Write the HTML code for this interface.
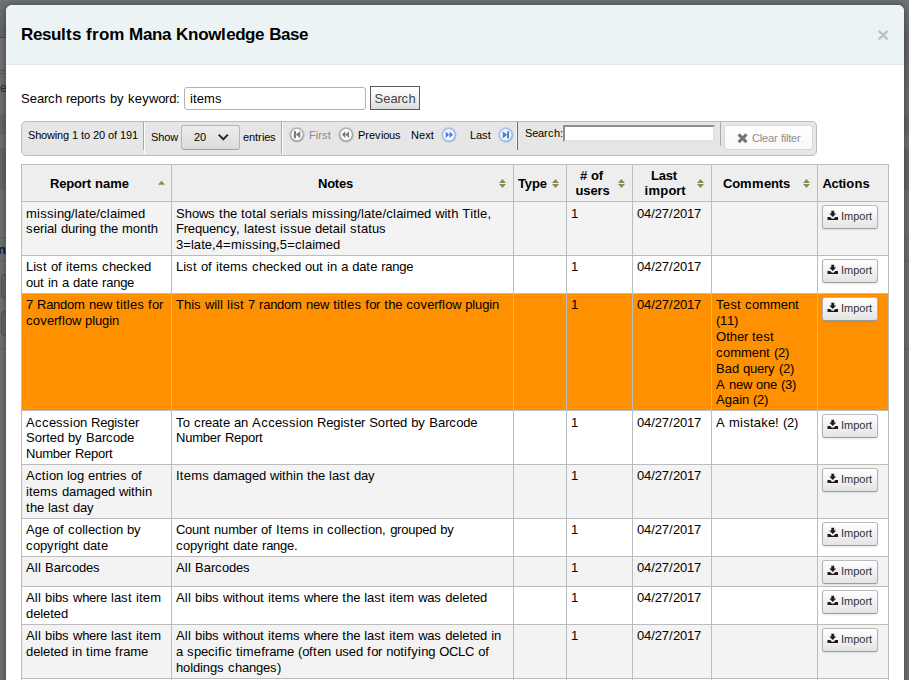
<!DOCTYPE html>
<html lang="en">
<head>
<meta charset="utf-8">
<title>Results from Mana Knowledge Base</title>
<style>
*{box-sizing:border-box;}
html,body{margin:0;padding:0;}
body{width:909px;height:680px;overflow:hidden;position:relative;background:#6b6f6f;
  font-family:"Liberation Sans",Arial,Helvetica,sans-serif;font-size:13px;line-height:16px;color:#000;}
.abs{position:absolute;white-space:nowrap;}
#bd{position:absolute;left:0;top:0;width:909px;height:680px;background:#6f6f6f;}
#bd1{position:absolute;left:0;top:0;width:909px;height:37px;background:linear-gradient(#6e7373,#5f6363);}
#bd2{position:absolute;left:0;top:37px;width:6px;height:1px;background:#4c4c4c;}
#bd3{position:absolute;left:900px;top:0;width:9px;height:114px;background:linear-gradient(#6e7373 0,#616565 38px,#6d6d6b 112px);}
.bl{position:absolute;left:0;width:909px;height:1px;background:#5c6c6d;}
.bb{position:absolute;left:0;width:909px;background:#626767;}
.bk{position:absolute;left:1px;width:40px;height:25px;border:1px solid #505050;border-radius:4px;background:#686868;}
.be{position:absolute;font-size:13px;line-height:16px;color:#0e2f56;}
#modal{position:absolute;left:6px;top:5px;width:898px;height:700px;background:#fff;border-radius:6px 6px 0 0;
  box-shadow:0 0 6px 1px rgba(0,0,0,.32);}
#mhead{position:absolute;left:0;top:0;width:898px;height:60px;background:#ecf3f5;border-bottom:1px solid #e4e6e6;border-radius:6px 6px 0 0;}
#mhead h3{position:absolute;left:15px;top:17px;margin:0;font-size:17px;line-height:26px;font-weight:bold;color:#000;white-space:nowrap;}
#close{position:absolute;left:871px;top:16px;font-size:21px;line-height:28px;font-weight:bold;color:#000;opacity:.2;text-shadow:0 1px 0 #fff;}
#lbl{left:21px;top:91px;font-size:13px;line-height:16px;}
#kw{position:absolute;left:184px;top:87px;width:182px;height:23px;border:1px solid #b4b4ac;border-radius:3px;background:#fff;
  font-size:13px;line-height:21px;padding:0 0 0 5px;color:#000;}
#sbtn{position:absolute;left:370px;top:86px;width:50px;height:24px;border:1px solid #5a5a5a;background:linear-gradient(#fff,#f3f3f3 45%,#dcdcdc);
  font-size:13px;line-height:24px;color:#444;text-align:center;}
#pager{position:absolute;left:21px;top:121px;width:796px;height:35px;border:1px solid #bcbcbc;border-radius:5px;background:#e6e6e6;font-size:11px;line-height:14px;}
#pager .t{position:absolute;white-space:nowrap;color:#000;}
.vl{position:absolute;width:1px;}
table{position:absolute;left:21px;top:164px;width:868px;border-collapse:separate;border-spacing:0;table-layout:fixed;
  border-top:1px solid #bcbcbc;border-right:1px solid #bcbcbc;}
td,th{border-bottom:1px solid #bcbcbc;border-left:1px solid #bcbcbc;padding:0 0 0 4px;vertical-align:top;text-align:left;overflow:hidden;white-space:nowrap;}
th{background:#eeeeee;font-weight:bold;text-align:center;vertical-align:middle;padding:0 18px 0 4px;position:relative;line-height:15px;}
td{background:#fff;}
tr.o td{background:#f3f3f3;}
tr.hl td{background:#ff9000;}
.l{display:block;height:16px;line-height:16px;}
.l.s{height:15px;}
.si{position:absolute;right:6px;top:14px;width:7px;height:9px;}
.si.b{right:7px;}
.hd{display:block;position:relative;}
td.a{padding:3px 0 0 4px;}
.btn{display:block;position:relative;width:56px;height:24px;border:1px solid;border-color:#bababa #b2b2b2 #9d9d9d;border-radius:3px;
  background:linear-gradient(#fff,#e4e4e4);box-shadow:0 1px 2px rgba(0,0,0,.1);font-size:11px;line-height:22px;color:#333;white-space:nowrap;}
.btn svg{position:absolute;left:4px;top:4px;width:12px;height:11px;}
.btn span{position:absolute;left:18px;top:-1px;}
#sel{position:absolute;left:159px;top:3px;width:59px;height:25px;border:1px solid #b6b6b6;border-bottom-color:#a0a0a0;border-radius:3px;background:linear-gradient(#ececec,#dcdcdc);}
#flt{position:absolute;left:541px;top:3px;width:152px;height:17px;background:#fff;border:2px solid;border-color:#8e8e8e #e2e2e2 #e2e2e2 #8e8e8e;}
#clr{position:absolute;left:702px;top:3px;width:89px;height:25px;border:1px solid #d6d6d6;border-radius:3px;background:linear-gradient(#fff,#f8f8f8);}
</style>
</head>
<body>
<svg width="0" height="0" style="position:absolute"><defs><radialGradient id="hg"><stop offset="0.66" stop-color="#6f6f6f" stop-opacity=".8"/><stop offset="0.8" stop-color="#777" stop-opacity=".45"/><stop offset="1" stop-color="#808080" stop-opacity="0"/></radialGradient><radialGradient id="hb"><stop offset="0.66" stop-color="#86abe8" stop-opacity=".95"/><stop offset="0.82" stop-color="#94b6ee" stop-opacity=".6"/><stop offset="1" stop-color="#9fbdf0" stop-opacity="0"/></radialGradient><radialGradient id="hs"><stop offset="0.6" stop-color="#555" stop-opacity=".55"/><stop offset="1" stop-color="#555" stop-opacity="0"/></radialGradient></defs></svg>
<div id="bd"><div id="bd1"></div><div id="bd2"></div><div class="bl" style="top:70px;width:6px;background:#595959"></div><div id="bd3"></div><div class="bl" style="top:73px;width:6px;background:#566a22"></div><div class="bb" style="top:114px;height:21px"></div><div class="bb" style="top:148px;height:42px"></div><div class="bl" style="top:237px;height:2px"></div><div class="bl" style="top:260px;height:2px"></div><div class="bl" style="top:348px;height:2px"></div><div class="bk" style="top:274px"></div><div class="bk" style="top:311px"></div><div class="be" style="left:0;top:80px;font-size:12px">e</div><div class="be" style="left:-2px;top:242px;font-weight:bold;color:#101c3e">n</div></div>
<div id="modal">
  <div id="mhead">
    <h3 style="word-spacing:0.28px"><span style="letter-spacing:-.39px">Resu</span><span style="letter-spacing:.31px">lt</span><span style="letter-spacing:-.45px">s</span> <span style="letter-spacing:.36px">fr</span><span style="letter-spacing:-.25px">om</span> <span style="letter-spacing:-.36px">Mana</span> <span style="letter-spacing:-.32px">Know</span><span style="letter-spacing:.28px">l</span><span style="letter-spacing:-.42px">edge</span> <span style="letter-spacing:-.41px">Base</span></h3>
    <div id="close">×</div>
  </div>
</div>
<div class="abs" id="lbl" style="word-spacing:0.39px"><span style="letter-spacing:.05px">Se</span><span style="letter-spacing:-.28px">ar</span><span style="letter-spacing:.50px">c</span><span style="letter-spacing:-.23px">h</span> <span style="letter-spacing:-.27px">repor</span><span style="letter-spacing:.44px">ts</span> <span style="letter-spacing:-.23px">b</span><span style="letter-spacing:.50px">y</span> <span style="letter-spacing:.26px">key</span><span style="letter-spacing:-.29px">word</span><span style="letter-spacing:.39px">:</span></div>
<div id="kw"><span style="letter-spacing:.11px">item</span><span style="letter-spacing:.50px">s</span></div>
<div id="sbtn"><span style="letter-spacing:.05px">Se</span><span style="letter-spacing:-.28px">ar</span><span style="letter-spacing:.50px">c</span><span style="letter-spacing:-.23px">h</span></div>
<div id="pager">
<div class="t" style="left:6px;top:6px;word-spacing:-0.06px"><span style="letter-spacing:-.17px">Showing</span> <span style="letter-spacing:-.12px">1</span> <span style="letter-spacing:-.09px">to</span> <span style="letter-spacing:-.12px">20</span> <span style="letter-spacing:-.09px">of</span> <span style="letter-spacing:-.12px">191</span></div>
<div class="vl" style="left:121px;top:0;height:28px;background:#a9a9a9"></div>
<div class="vl" style="left:122px;top:0;height:32px;background:#fff"></div>
<div class="t" style="left:129px;top:8px"><span style="letter-spacing:-.13px">Show</span></div>
<div id="sel"><div class="t" style="left:12px;top:4px"><span style="letter-spacing:-.12px">20</span></div><svg style="position:absolute;left:35px;top:7px;" width="12" height="9" viewBox="0 0 12 9"><path d="M1.700 1.600 L6.300 6.300 L10.900 1.600" fill="none" stroke="#2a2a2a" stroke-width="2"/></svg></div>
<div class="t" style="left:221px;top:8px"><span style="letter-spacing:-.10px">ent</span><span style="letter-spacing:.34px">r</span><span style="letter-spacing:-.28px">ie</span><span style="letter-spacing:.50px">s</span></div>
<div class="vl" style="left:259px;top:0;height:32px;background:#a9a9a9"></div>
<div class="vl" style="left:260px;top:0;height:32px;background:#fff"></div>
<svg style="position:absolute;left:264px;top:2px;" width="20" height="20" viewBox="0 0 20 20"><circle cx="10.95" cy="10.90" r="8.400" fill="url(#hg)"/><circle cx="10.95" cy="10.60" r="5.800" fill="#fdfdfd"/><path transform="translate(10.95 10.60)" d="M-3.100 -3.600h2.100v7.200h-2.100z M3.400 -3.700v7.400L-1.200 0z" fill="#7c7c7c"/></svg>
<div class="t" style="left:287px;top:6px;;color:#8a8a8a"><span style="letter-spacing:.06px">Fir</span><span style="letter-spacing:.22px">st</span></div>
<svg style="position:absolute;left:314px;top:2px;" width="20" height="20" viewBox="0 0 20 20"><circle cx="10.10" cy="10.90" r="8.400" fill="url(#hg)"/><circle cx="10.10" cy="10.60" r="5.800" fill="#fdfdfd"/><path transform="translate(10.10 10.60)" d="M-0.700 -3.300v6.600L-4.300 0z M2.900 -3.300v6.600L-0.700 0z" fill="#7c7c7c"/></svg>
<div class="t" style="left:336px;top:6px"><span style="letter-spacing:-.04px">Pre</span><span style="letter-spacing:.50px">v</span><span style="letter-spacing:-.23px">iou</span><span style="letter-spacing:.50px">s</span></div>
<div class="t" style="left:389px;top:6px"><span style="letter-spacing:.10px">Next</span></div>
<svg style="position:absolute;left:416px;top:2px;" width="20" height="20" viewBox="0 0 20 20"><circle cx="11.50" cy="11.70" r="7.300" fill="url(#hs)"/><circle cx="10.90" cy="10.80" r="8.400" fill="url(#hb)"/><circle cx="10.90" cy="10.80" r="5.800" fill="#f4f8fe"/><path transform="translate(10.90 10.80)" d="M-3.200 -3.300v6.600L0.300 0z M0.600 -3.300v6.600L4.200 0z" fill="#4a7fd0"/></svg>
<div class="t" style="left:448px;top:6px"><span style="letter-spacing:-.12px">La</span><span style="letter-spacing:.22px">st</span></div>
<svg style="position:absolute;left:473px;top:2px;" width="20" height="20" viewBox="0 0 20 20"><circle cx="11.40" cy="11.70" r="7.300" fill="url(#hs)"/><circle cx="10.80" cy="10.80" r="8.400" fill="url(#hb)"/><circle cx="10.80" cy="10.80" r="5.800" fill="#f4f8fe"/><path transform="translate(10.80 10.80)" d="M-3.000 -3.600v7.200L1.300 0z M1.300 -3.600h2v7.200h-2z" fill="#4a7fd0"/></svg>
<div class="vl" style="left:494px;top:0;height:28px;background:#f4f4f4"></div>
<div class="vl" style="left:495px;top:0;height:28px;background:#6c6c6c"></div>
<div class="t" style="left:503px;top:4px"><span style="letter-spacing:-.19px">Sea</span><span style="letter-spacing:.42px">rc</span><span style="letter-spacing:-.09px">h:</span></div>
<div id="flt"></div>
<div class="vl" style="left:698px;top:0;height:24px;background:#a9a9a9"></div>
<div id="clr"><svg style="position:absolute;left:12px;top:7px;" width="11" height="11" viewBox="0 0 11 11"><path d="M1.600 1.400 L9.500 9.200 M9.500 1.400 L1.600 9.200" stroke="#757575" stroke-width="3.100" fill="none"/></svg><div class="t" style="left:27px;top:5px;word-spacing:-0.06px;color:#8c8c8c;text-shadow:0 1px 1px rgba(255,255,255,.75)"><span style="letter-spacing:-.16px">Clea</span><span style="letter-spacing:.34px">r</span> <span style="letter-spacing:-.22px">filte</span><span style="letter-spacing:.34px">r</span></div></div>
</div>
<table>
<colgroup><col style="width:150px"><col style="width:342px"><col style="width:53px"><col style="width:66px"><col style="width:79px"><col style="width:106px"><col style="width:71px"></colgroup>
<thead>
<tr style="height:37px">
 <th><span class="hd" style="word-spacing:0.39px"><span style="letter-spacing:-.19px">Rep</span><span style="letter-spacing:-.11px">ort</span> name</span><svg class="si" viewBox="0 0 7 9"><path d="M0 5.700h7L3.500 1.700z" fill="#8a8a55"/></svg></th>
 <th><span class="hd"><span style="letter-spacing:-.22px">Notes</span></span><svg class="si b" viewBox="0 0 7 9"><path d="M0 4h7L3.500 0z M0 5h7L3.500 9z" fill="#8a8a55"/></svg></th>
 <th><span class="hd" style=";left:-0.5px"><span style="letter-spacing:-.09px">Type</span></span><svg class="si b" viewBox="0 0 7 9"><path d="M0 4h7L3.500 0z M0 5h7L3.500 9z" fill="#8a8a55"/></svg></th>
 <th><span class="hd" style="word-spacing:0.39px;left:-1px"><span style="letter-spacing:-.23px">#</span> <span style="letter-spacing:-.14px">of</span></span> <span class="hd"><span style="letter-spacing:-.14px">users</span></span><svg class="si b" viewBox="0 0 7 9"><path d="M0 4h7L3.500 0z M0 5h7L3.500 9z" fill="#8a8a55"/></svg></th>
 <th><span class="hd" style=";left:-1px"><span style="letter-spacing:-.18px">Last</span></span> <span class="hd"><span style="letter-spacing:.30px">imp</span><span style="letter-spacing:-.11px">ort</span></span><svg class="si b" viewBox="0 0 7 9"><path d="M0 4h7L3.500 0z M0 5h7L3.500 9z" fill="#8a8a55"/></svg></th>
 <th><span class="hd" style=";left:-1px"><span style="letter-spacing:-.16px">Co</span><span style="letter-spacing:.44px">mm</span><span style="letter-spacing:-.18px">ents</span></span><svg class="si b" viewBox="0 0 7 9"><path d="M0 4h7L3.500 0z M0 5h7L3.500 9z" fill="#8a8a55"/></svg></th>
 <th><span class="hd"><span style="letter-spacing:-.32px">Act</span><span style="letter-spacing:.17px">ion</span><span style="letter-spacing:-.23px">s</span></span></th>
</tr>
</thead>
<tbody>
<tr class="o" style="height:54px"><td style="padding-top:4px"><span class="l s"><span style="letter-spacing:.28px">missi</span><span style="letter-spacing:-.23px">ng</span><span style="letter-spacing:.14px">/late/</span><span style="letter-spacing:.31px">cl</span><span style="letter-spacing:-.08px">aimed</span></span> <span class="l" style="word-spacing:0.39px"><span style="letter-spacing:.50px">s</span><span style="letter-spacing:-.17px">eria</span><span style="letter-spacing:.11px">l</span> <span style="letter-spacing:-.19px">during</span> <span style="letter-spacing:.39px">t</span><span style="letter-spacing:-.23px">he</span> <span style="letter-spacing:-.03px">month</span></span></td><td style="padding-top:4px"><span class="l s" style="word-spacing:0.39px"><span style="letter-spacing:.05px">Sh</span><span style="letter-spacing:-.31px">ow</span><span style="letter-spacing:.50px">s</span> <span style="letter-spacing:.39px">t</span><span style="letter-spacing:-.23px">he</span> <span style="letter-spacing:.18px">tot</span><span style="letter-spacing:-.06px">al</span> <span style="letter-spacing:.50px">s</span><span style="letter-spacing:-.17px">eria</span><span style="letter-spacing:.31px">ls</span> <span style="letter-spacing:.28px">missi</span><span style="letter-spacing:-.23px">ng</span><span style="letter-spacing:.14px">/late/</span><span style="letter-spacing:.31px">cl</span><span style="letter-spacing:-.08px">aimed</span> <span style="letter-spacing:-.14px">wi</span><span style="letter-spacing:.39px">t</span><span style="letter-spacing:-.23px">h</span> <span style="font-kerning:none"><span style="letter-spacing:.14px">Title,</span></span></span> <span class="l" style="word-spacing:0.39px"><span style="letter-spacing:-.20px">Frequen</span><span style="letter-spacing:.45px">cy,</span> late<span style="letter-spacing:.44px">st</span> <span style="letter-spacing:.37px">iss</span><span style="letter-spacing:-.23px">ue</span> <span style="letter-spacing:-.23px">de</span><span style="letter-spacing:.10px">tail</span> <span style="letter-spacing:.44px">st</span><span style="letter-spacing:-.02px">atu</span><span style="letter-spacing:.50px">s</span></span> <span class="l"><span style="letter-spacing:.05px">3=late,4</span><span style="letter-spacing:.30px">=missi</span><span style="letter-spacing:-.23px">ng</span><span style="letter-spacing:.19px">,5=</span><span style="letter-spacing:.31px">cl</span><span style="letter-spacing:-.08px">aimed</span></span></td><td></td><td style="padding-top:4px"><span class="l s"><span style="letter-spacing:-.23px">1</span></span></td><td style="padding-top:4px"><span class="l s"><span style="letter-spacing:-.11px">04/27</span><span style="letter-spacing:.39px">/</span><span style="letter-spacing:-.23px">2017</span></span></td><td></td><td class="a"><div class="btn"><svg viewBox="-0.5 -0.8 12 11"><path d="M3.800 0h2.900v2.800h2L5.250 6.300 1.800 2.800h2z M0 6.200h2.600l1.800 1.700h1.700l1.800-1.700h2.600v2.900H0z" fill="#1c1c1c"/></svg><span>Import</span></div></td></tr>
<tr style="height:38px"><td style="padding-top:3px"><span class="l" style="word-spacing:0.39px"><span style="letter-spacing:-.06px">Li</span><span style="letter-spacing:.44px">st</span> <span style="letter-spacing:-.23px">o</span><span style="letter-spacing:.39px">f</span> <span style="letter-spacing:.11px">item</span><span style="letter-spacing:.50px">s</span> <span style="letter-spacing:.50px">c</span><span style="letter-spacing:-.23px">he</span><span style="letter-spacing:.50px">ck</span><span style="letter-spacing:-.23px">ed</span></span> <span class="l" style="word-spacing:0.39px"><span style="letter-spacing:-.23px">ou</span><span style="letter-spacing:.39px">t</span> <span style="letter-spacing:-.06px">in</span> <span style="letter-spacing:-.23px">a</span> <span style="letter-spacing:-.23px">da</span><span style="letter-spacing:.39px">t</span><span style="letter-spacing:-.23px">e</span> <span style="letter-spacing:-.25px">range</span></span></td><td style="padding-top:3px"><span class="l" style="word-spacing:0.39px"><span style="letter-spacing:-.06px">Li</span><span style="letter-spacing:.44px">st</span> <span style="letter-spacing:-.23px">o</span><span style="letter-spacing:.39px">f</span> <span style="letter-spacing:.11px">item</span><span style="letter-spacing:.50px">s</span> <span style="letter-spacing:.50px">c</span><span style="letter-spacing:-.23px">he</span><span style="letter-spacing:.50px">ck</span><span style="letter-spacing:-.23px">ed</span> <span style="letter-spacing:-.23px">ou</span><span style="letter-spacing:.39px">t</span> <span style="letter-spacing:-.06px">in</span> <span style="letter-spacing:-.23px">a</span> <span style="letter-spacing:-.23px">da</span><span style="letter-spacing:.39px">t</span><span style="letter-spacing:-.23px">e</span> <span style="letter-spacing:-.25px">range</span></span></td><td></td><td style="padding-top:3px"><span class="l"><span style="letter-spacing:-.23px">1</span></span></td><td style="padding-top:3px"><span class="l"><span style="letter-spacing:-.11px">04/27</span><span style="letter-spacing:.39px">/</span><span style="letter-spacing:-.23px">2017</span></span></td><td></td><td class="a"><div class="btn"><svg viewBox="-0.5 -0.8 12 11"><path d="M3.800 0h2.900v2.800h2L5.250 6.300 1.800 2.800h2z M0 6.200h2.600l1.800 1.700h1.700l1.800-1.700h2.600v2.900H0z" fill="#1c1c1c"/></svg><span>Import</span></div></td></tr>
<tr class="hl" style="height:117px"><td style="padding-top:3px"><span class="l" style="word-spacing:0.39px"><span style="letter-spacing:-.23px">7</span> <span style="letter-spacing:-.26px">Rando</span><span style="letter-spacing:.17px">m</span> <span style="letter-spacing:-.28px">new</span> <span style="letter-spacing:.21px">titles</span> <span style="letter-spacing:.39px">f</span><span style="letter-spacing:-.28px">or</span></span> <span class="l" style="word-spacing:0.39px"><span style="letter-spacing:.26px">cov</span><span style="letter-spacing:-.28px">er</span><span style="letter-spacing:.25px">fl</span><span style="letter-spacing:-.31px">ow</span> <span style="letter-spacing:-.12px">plugin</span></span></td><td style="padding-top:3px"><span class="l" style="word-spacing:0.39px"><span style="letter-spacing:-.02px">Thi</span><span style="letter-spacing:.50px">s</span> <span style="letter-spacing:-.14px">wi</span><span style="letter-spacing:.11px">ll</span> <span style="letter-spacing:.24px">lis</span><span style="letter-spacing:.39px">t</span> <span style="letter-spacing:-.23px">7</span> <span style="letter-spacing:-.25px">rando</span><span style="letter-spacing:.17px">m</span> <span style="letter-spacing:-.28px">new</span> <span style="letter-spacing:.21px">titles</span> <span style="letter-spacing:.39px">f</span><span style="letter-spacing:-.28px">or</span> <span style="letter-spacing:.39px">t</span><span style="letter-spacing:-.23px">he</span> <span style="letter-spacing:.26px">cov</span><span style="letter-spacing:-.28px">er</span><span style="letter-spacing:.25px">fl</span><span style="letter-spacing:-.31px">ow</span> <span style="letter-spacing:-.12px">plugin</span></span></td><td></td><td style="padding-top:3px"><span class="l"><span style="letter-spacing:-.23px">1</span></span></td><td style="padding-top:3px"><span class="l"><span style="letter-spacing:-.11px">04/27</span><span style="letter-spacing:.39px">/</span><span style="letter-spacing:-.23px">2017</span></span></td><td style="padding-top:3px"><span class="l" style="word-spacing:0.39px"><span style="letter-spacing:.26px">Tes</span><span style="letter-spacing:.39px">t</span> <span style="letter-spacing:.50px">c</span><span style="letter-spacing:-.03px">omme</span><span style="letter-spacing:-.23px">n</span><span style="letter-spacing:.39px">t</span></span> <span class="l"><span style="font-kerning:none"><span style="letter-spacing:-.28px">(11)</span></span></span> <span class="l" style="word-spacing:0.39px"><span style="letter-spacing:.02px">Oth</span><span style="letter-spacing:-.28px">er</span> <span style="letter-spacing:.22px">tes</span><span style="letter-spacing:.39px">t</span></span> <span class="l" style="word-spacing:0.39px"><span style="letter-spacing:.50px">c</span><span style="letter-spacing:-.03px">omme</span><span style="letter-spacing:-.23px">n</span><span style="letter-spacing:.39px">t</span> <span style="letter-spacing:-.30px">(2)</span></span> <span class="l" style="word-spacing:0.39px"><span style="letter-spacing:.05px">Ba</span><span style="letter-spacing:-.23px">d</span> <span style="letter-spacing:-.25px">quer</span><span style="letter-spacing:.50px">y</span> <span style="letter-spacing:-.30px">(2)</span></span> <span class="l s" style="word-spacing:0.39px"><span style="letter-spacing:.33px">A</span> <span style="letter-spacing:-.28px">new</span> <span style="letter-spacing:-.23px">one</span> <span style="letter-spacing:-.30px">(3)</span></span> <span class="l" style="word-spacing:0.39px"><span style="letter-spacing:.05px">Ag</span><span style="letter-spacing:-.12px">ain</span> <span style="letter-spacing:-.30px">(2)</span></span></td><td class="a"><div class="btn"><svg viewBox="-0.5 -0.8 12 11"><path d="M3.800 0h2.900v2.800h2L5.250 6.300 1.800 2.800h2z M0 6.200h2.600l1.800 1.700h1.700l1.800-1.700h2.600v2.900H0z" fill="#1c1c1c"/></svg><span>Import</span></div></td></tr>
<tr style="height:54px"><td style="padding-top:4px"><span class="l s" style="word-spacing:0.39px"><span style="letter-spacing:.44px">Acc</span><span style="letter-spacing:-.23px">e</span><span style="letter-spacing:.37px">ssi</span><span style="letter-spacing:-.23px">on</span> <span style="letter-spacing:-.18px">Regi</span><span style="letter-spacing:.44px">st</span><span style="letter-spacing:-.28px">er</span></span> <span class="l" style="word-spacing:0.39px"><span style="letter-spacing:.05px">So</span><span style="letter-spacing:-.10px">rted</span> <span style="letter-spacing:-.23px">b</span><span style="letter-spacing:.50px">y</span> <span style="letter-spacing:.05px">Ba</span><span style="letter-spacing:-.33px">r</span><span style="letter-spacing:.50px">c</span><span style="letter-spacing:-.23px">ode</span></span> <span class="l" style="word-spacing:0.39px"><span style="letter-spacing:-.21px">Number</span> <span style="letter-spacing:-.28px">Repor</span><span style="letter-spacing:.39px">t</span></span></td><td style="padding-top:4px"><span class="l s" style="word-spacing:0.39px"><span style="letter-spacing:.13px">To</span> <span style="letter-spacing:.50px">c</span><span style="letter-spacing:-.26px">rea</span><span style="letter-spacing:.39px">t</span><span style="letter-spacing:-.23px">e</span> <span style="letter-spacing:-.23px">an</span> <span style="letter-spacing:.44px">Acc</span><span style="letter-spacing:-.23px">e</span><span style="letter-spacing:.37px">ssi</span><span style="letter-spacing:-.23px">on</span> <span style="letter-spacing:-.18px">Regi</span><span style="letter-spacing:.44px">st</span><span style="letter-spacing:-.28px">er</span> <span style="letter-spacing:.05px">So</span><span style="letter-spacing:-.10px">rted</span> <span style="letter-spacing:-.23px">b</span><span style="letter-spacing:.50px">y</span> <span style="letter-spacing:.05px">Ba</span><span style="letter-spacing:-.33px">r</span><span style="letter-spacing:.50px">c</span><span style="letter-spacing:-.23px">ode</span></span> <span class="l" style="word-spacing:0.39px"><span style="letter-spacing:-.21px">Number</span> <span style="letter-spacing:-.28px">Repor</span><span style="letter-spacing:.39px">t</span></span></td><td></td><td style="padding-top:4px"><span class="l s"><span style="letter-spacing:-.23px">1</span></span></td><td style="padding-top:4px"><span class="l s"><span style="letter-spacing:-.11px">04/27</span><span style="letter-spacing:.39px">/</span><span style="letter-spacing:-.23px">2017</span></span></td><td style="padding-top:4px"><span class="l s" style="word-spacing:0.39px"><span style="letter-spacing:.33px">A</span> <span style="letter-spacing:.24px">mistak</span><span style="letter-spacing:-.23px">e</span><span style="letter-spacing:.39px">!</span> <span style="letter-spacing:-.30px">(2)</span></span></td><td class="a"><div class="btn"><svg viewBox="-0.5 -0.8 12 11"><path d="M3.800 0h2.900v2.800h2L5.250 6.300 1.800 2.800h2z M0 6.200h2.600l1.800 1.700h1.700l1.800-1.700h2.600v2.900H0z" fill="#1c1c1c"/></svg><span>Import</span></div></td></tr>
<tr class="o" style="height:54px"><td style="padding-top:3px"><span class="l" style="word-spacing:0.39px"><span style="letter-spacing:.33px">Acti</span><span style="letter-spacing:-.23px">on</span> <span style="letter-spacing:-.12px">log</span> <span style="letter-spacing:-.09px">entrie</span><span style="letter-spacing:.50px">s</span> <span style="letter-spacing:-.23px">o</span><span style="letter-spacing:.39px">f</span></span> <span class="l" style="word-spacing:0.39px"><span style="letter-spacing:.11px">item</span><span style="letter-spacing:.50px">s</span> <span style="letter-spacing:-.17px">damaged</span> <span style="letter-spacing:-.14px">wi</span><span style="letter-spacing:.09px">thi</span><span style="letter-spacing:-.23px">n</span></span> <span class="l" style="word-spacing:0.39px"><span style="letter-spacing:.39px">t</span><span style="letter-spacing:-.23px">he</span> <span style="letter-spacing:-.06px">la</span><span style="letter-spacing:.44px">st</span> <span style="letter-spacing:-.23px">da</span><span style="letter-spacing:.50px">y</span></span></td><td style="padding-top:3px"><span class="l" style="word-spacing:0.39px"><span style="letter-spacing:.24px">Items</span> <span style="letter-spacing:-.17px">damaged</span> <span style="letter-spacing:-.14px">wi</span><span style="letter-spacing:.09px">thi</span><span style="letter-spacing:-.23px">n</span> <span style="letter-spacing:.39px">t</span><span style="letter-spacing:-.23px">he</span> <span style="letter-spacing:-.06px">la</span><span style="letter-spacing:.44px">st</span> <span style="letter-spacing:-.23px">da</span><span style="letter-spacing:.50px">y</span></span></td><td></td><td style="padding-top:3px"><span class="l"><span style="letter-spacing:-.23px">1</span></span></td><td style="padding-top:3px"><span class="l"><span style="letter-spacing:-.11px">04/27</span><span style="letter-spacing:.39px">/</span><span style="letter-spacing:-.23px">2017</span></span></td><td></td><td class="a"><div class="btn"><svg viewBox="-0.5 -0.8 12 11"><path d="M3.800 0h2.900v2.800h2L5.250 6.300 1.800 2.800h2z M0 6.200h2.600l1.800 1.700h1.700l1.800-1.700h2.600v2.900H0z" fill="#1c1c1c"/></svg><span>Import</span></div></td></tr>
<tr style="height:38px"><td style="padding-top:3px"><span class="l" style="word-spacing:0.39px"><span style="letter-spacing:.05px">Ag</span><span style="letter-spacing:-.23px">e</span> <span style="letter-spacing:-.23px">o</span><span style="letter-spacing:.39px">f</span> <span style="letter-spacing:.50px">c</span><span style="letter-spacing:-.06px">olle</span><span style="letter-spacing:.33px">cti</span><span style="letter-spacing:-.23px">on</span> <span style="letter-spacing:-.23px">b</span><span style="letter-spacing:.50px">y</span></span> <span class="l" style="word-spacing:0.39px"><span style="letter-spacing:.50px">c</span><span style="letter-spacing:-.23px">op</span><span style="letter-spacing:.50px">y</span><span style="letter-spacing:-.17px">righ</span><span style="letter-spacing:.39px">t</span> <span style="letter-spacing:-.23px">da</span><span style="letter-spacing:.39px">t</span><span style="letter-spacing:-.23px">e</span></span></td><td style="padding-top:3px"><span class="l" style="word-spacing:0.39px"><span style="letter-spacing:-.27px">Coun</span><span style="letter-spacing:.39px">t</span> <span style="letter-spacing:-.18px">number</span> <span style="letter-spacing:-.23px">o</span><span style="letter-spacing:.39px">f</span> <span style="letter-spacing:.24px">Items</span> <span style="letter-spacing:-.06px">in</span> <span style="letter-spacing:.50px">c</span><span style="letter-spacing:-.06px">olle</span><span style="letter-spacing:.33px">cti</span><span style="letter-spacing:-.23px">on</span><span style="letter-spacing:.39px">,</span> <span style="letter-spacing:-.24px">grouped</span> <span style="letter-spacing:-.23px">b</span><span style="letter-spacing:.50px">y</span></span> <span class="l" style="word-spacing:0.39px"><span style="letter-spacing:.50px">c</span><span style="letter-spacing:-.23px">op</span><span style="letter-spacing:.50px">y</span><span style="letter-spacing:-.17px">righ</span><span style="letter-spacing:.39px">t</span> <span style="letter-spacing:-.23px">da</span><span style="letter-spacing:.39px">t</span><span style="letter-spacing:-.23px">e</span> <span style="letter-spacing:-.25px">range</span><span style="letter-spacing:.39px">.</span></span></td><td></td><td style="padding-top:3px"><span class="l"><span style="letter-spacing:-.23px">1</span></span></td><td style="padding-top:3px"><span class="l"><span style="letter-spacing:-.11px">04/27</span><span style="letter-spacing:.39px">/</span><span style="letter-spacing:-.23px">2017</span></span></td><td></td><td class="a"><div class="btn"><svg viewBox="-0.5 -0.8 12 11"><path d="M3.800 0h2.900v2.800h2L5.250 6.300 1.800 2.800h2z M0 6.200h2.600l1.800 1.700h1.700l1.800-1.700h2.600v2.900H0z" fill="#1c1c1c"/></svg><span>Import</span></div></td></tr>
<tr class="o" style="height:30px"><td style="padding-top:3px"><span class="l" style="word-spacing:0.39px"><span style="letter-spacing:.18px">All</span> <span style="letter-spacing:.05px">Ba</span><span style="letter-spacing:-.33px">r</span><span style="letter-spacing:.50px">c</span><span style="letter-spacing:-.23px">ode</span><span style="letter-spacing:.50px">s</span></span></td><td style="padding-top:3px"><span class="l" style="word-spacing:0.39px"><span style="letter-spacing:.18px">All</span> <span style="letter-spacing:.05px">Ba</span><span style="letter-spacing:-.33px">r</span><span style="letter-spacing:.50px">c</span><span style="letter-spacing:-.23px">ode</span><span style="letter-spacing:.50px">s</span></span></td><td></td><td style="padding-top:3px"><span class="l"><span style="letter-spacing:-.23px">1</span></span></td><td style="padding-top:3px"><span class="l"><span style="letter-spacing:-.11px">04/27</span><span style="letter-spacing:.39px">/</span><span style="letter-spacing:-.23px">2017</span></span></td><td></td><td class="a"><div class="btn"><svg viewBox="-0.5 -0.8 12 11"><path d="M3.800 0h2.900v2.800h2L5.250 6.300 1.800 2.800h2z M0 6.200h2.600l1.800 1.700h1.700l1.800-1.700h2.600v2.900H0z" fill="#1c1c1c"/></svg><span>Import</span></div></td></tr>
<tr style="height:38px"><td style="padding-top:3px"><span class="l" style="word-spacing:0.39px"><span style="letter-spacing:.18px">All</span> <span style="letter-spacing:-.12px">bib</span><span style="letter-spacing:.50px">s</span> <span style="letter-spacing:-.28px">where</span> <span style="letter-spacing:-.06px">la</span><span style="letter-spacing:.44px">st</span> <span style="letter-spacing:.11px">item</span></span> <span class="l"><span style="letter-spacing:-.09px">deleted</span></span></td><td style="padding-top:3px"><span class="l" style="word-spacing:0.39px"><span style="letter-spacing:.18px">All</span> <span style="letter-spacing:-.12px">bib</span><span style="letter-spacing:.50px">s</span> <span style="letter-spacing:-.14px">wi</span><span style="letter-spacing:.39px">t</span><span style="letter-spacing:-.23px">hou</span><span style="letter-spacing:.39px">t</span> <span style="letter-spacing:.11px">item</span><span style="letter-spacing:.50px">s</span> <span style="letter-spacing:-.28px">where</span> <span style="letter-spacing:.39px">t</span><span style="letter-spacing:-.23px">he</span> <span style="letter-spacing:-.06px">la</span><span style="letter-spacing:.44px">st</span> <span style="letter-spacing:.11px">item</span> <span style="letter-spacing:-.31px">wa</span><span style="letter-spacing:.50px">s</span> <span style="letter-spacing:-.09px">deleted</span></span></td><td></td><td style="padding-top:3px"><span class="l"><span style="letter-spacing:-.23px">1</span></span></td><td style="padding-top:3px"><span class="l"><span style="letter-spacing:-.11px">04/27</span><span style="letter-spacing:.39px">/</span><span style="letter-spacing:-.23px">2017</span></span></td><td></td><td class="a"><div class="btn"><svg viewBox="-0.5 -0.8 12 11"><path d="M3.800 0h2.900v2.800h2L5.250 6.300 1.800 2.800h2z M0 6.200h2.600l1.800 1.700h1.700l1.800-1.700h2.600v2.900H0z" fill="#1c1c1c"/></svg><span>Import</span></div></td></tr>
<tr class="o" style="height:54px"><td style="padding-top:3px"><span class="l" style="word-spacing:0.39px"><span style="letter-spacing:.18px">All</span> <span style="letter-spacing:-.12px">bib</span><span style="letter-spacing:.50px">s</span> <span style="letter-spacing:-.28px">where</span> <span style="letter-spacing:-.06px">la</span><span style="letter-spacing:.44px">st</span> <span style="letter-spacing:.11px">item</span></span> <span class="l" style="word-spacing:0.39px"><span style="letter-spacing:-.09px">deleted</span> <span style="letter-spacing:-.06px">in</span> <span style="letter-spacing:.22px">tim</span><span style="letter-spacing:-.23px">e</span> <span style="letter-spacing:.39px">f</span><span style="letter-spacing:-.15px">rame</span></span></td><td style="padding-top:3px"><span class="l" style="word-spacing:0.39px"><span style="letter-spacing:.18px">All</span> <span style="letter-spacing:-.12px">bib</span><span style="letter-spacing:.50px">s</span> <span style="letter-spacing:-.14px">wi</span><span style="letter-spacing:.39px">t</span><span style="letter-spacing:-.23px">hou</span><span style="letter-spacing:.39px">t</span> <span style="letter-spacing:.11px">item</span><span style="letter-spacing:.50px">s</span> <span style="letter-spacing:-.28px">where</span> <span style="letter-spacing:.39px">t</span><span style="letter-spacing:-.23px">he</span> <span style="letter-spacing:-.06px">la</span><span style="letter-spacing:.44px">st</span> <span style="letter-spacing:.11px">item</span> <span style="letter-spacing:-.31px">wa</span><span style="letter-spacing:.50px">s</span> <span style="letter-spacing:-.09px">deleted</span> <span style="letter-spacing:-.06px">in</span></span> <span class="l" style="word-spacing:0.39px"><span style="letter-spacing:-.23px">a</span> <span style="letter-spacing:.50px">s</span><span style="letter-spacing:-.23px">pe</span><span style="letter-spacing:.32px">cific</span> <span style="letter-spacing:.17px">timef</span><span style="letter-spacing:-.15px">rame</span> <span style="letter-spacing:-.28px">(o</span><span style="letter-spacing:.39px">ft</span><span style="letter-spacing:-.23px">en</span> use<span style="letter-spacing:-.23px">d</span> <span style="letter-spacing:.39px">f</span><span style="letter-spacing:-.28px">or</span> <span style="letter-spacing:-.23px">no</span><span style="letter-spacing:.30px">tifyi</span><span style="letter-spacing:-.23px">ng</span> <span style="letter-spacing:-.28px">OCLC</span> <span style="letter-spacing:-.23px">o</span><span style="letter-spacing:.39px">f</span></span> <span class="l" style="word-spacing:0.39px"><span style="letter-spacing:-.13px">holding</span><span style="letter-spacing:.50px">s</span> <span style="letter-spacing:.50px">c</span><span style="letter-spacing:-.23px">hange</span><span style="letter-spacing:.50px">s</span><span style="letter-spacing:-.33px">)</span></span></td><td></td><td style="padding-top:3px"><span class="l"><span style="letter-spacing:-.23px">1</span></span></td><td style="padding-top:3px"><span class="l"><span style="letter-spacing:-.11px">04/27</span><span style="letter-spacing:.39px">/</span><span style="letter-spacing:-.23px">2017</span></span></td><td></td><td class="a"><div class="btn"><svg viewBox="-0.5 -0.8 12 11"><path d="M3.800 0h2.900v2.800h2L5.250 6.300 1.800 2.800h2z M0 6.200h2.600l1.800 1.700h1.700l1.800-1.700h2.600v2.900H0z" fill="#1c1c1c"/></svg><span>Import</span></div></td></tr>
<tr style="height:38px"><td></td><td></td><td></td><td></td><td></td><td></td><td></td></tr>
</tbody>
</table>
</body>
</html>
